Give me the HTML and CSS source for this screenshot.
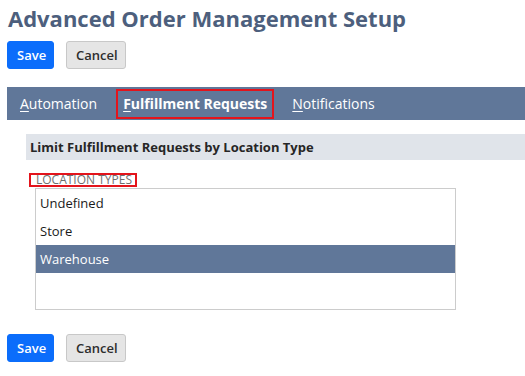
FILE: index.html
```html
<!DOCTYPE html>
<html>
<head>
<meta charset="utf-8">
<link rel="stylesheet" href="styles.css">
</head>
<body>
<h1 class="title">Advanced Order Management Setup</h1>
<div class="actions">
  <button class="btn btn-primary">Save</button>
  <button class="btn btn-secondary">Cancel</button>
</div>
<nav class="tabs">
  <span class="tab"><u>A</u>utomation</span>
  <span class="tab tab-active"><u>F</u>ulfillment Requests</span>
  <span class="tab"><u>N</u>otifications</span>
</nav>
<section class="content">
  <div class="section-header">Limit Fulfillment Requests by Location Type</div>
  <div class="field">
    <div class="field-label">LOCATION TYPES</div>
    <ul class="listbox">
      <li class="option">Undefined</li>
      <li class="option">Store</li>
      <li class="option option-selected">Warehouse</li>
    </ul>
  </div>
</section>
<div class="actions actions-bottom">
  <button class="btn btn-primary">Save</button>
  <button class="btn btn-secondary">Cancel</button>
</div>
</body>
</html>
```

FILE: styles.css
```css
html, body {
  margin: 0;
  padding: 0;
  background: #ffffff;
  font-family: "Open Sans", "Liberation Sans", sans-serif;
}
.title {
  margin: 0;
  padding: 3px 0 0 8px;
  font-size: 22px;
  line-height: 30px;
  font-weight: 700;
  color: #4d5f7d;
}
.actions {
  display: flex;
  gap: 12px;
  padding: 8px 0 0 7px;
}
.actions-bottom {
  padding-top: 24px;
}
.btn {
  height: 28px;
  box-sizing: border-box;
  border-radius: 3px;
  font-family: "Open Sans", "Liberation Sans", sans-serif;
  font-size: 13px;
  font-weight: 600;
  padding: 0 9px;
  cursor: pointer;
}
.btn-primary {
  background: #0b6dfb;
  color: #ffffff;
  border: 1px solid #0b6dfb;
  width: 47px;
}
.btn-secondary {
  background: #e5e5e5;
  color: #2d2d2d;
  border: 1px solid #c8c8c8;
  width: 60px;
}
.tabs {
  margin: 18px 0 0 7px;
  height: 33px;
  background: #607799;
  display: flex;
  align-items: center;
  padding-left: 13px;
  gap: 0;
  position: relative;
}
.tab {
  color: #ffffff;
  font-size: 14px;
  line-height: 20px;
  margin-right: 20px;
}
.tab u {
  text-decoration-thickness: 1px;
  text-underline-offset: 2px;
}
.tab-active {
  font-weight: 700;
  border: 2px solid #e3141c;
  padding: 3px 5px;
  margin-left: -1px;
  margin-right: 18px;
  position: relative;
}
.tab-active::after {
  content: "";
  position: absolute;
  left: 72px;
  bottom: -7px;
  width: 0;
  height: 0;
  border-left: 5px solid transparent;
  border-right: 5px solid transparent;
  border-bottom: 4px solid #ffffff;
}
.content {
  padding: 14px 0 0 26px;
}
.section-header {
  height: 26px;
  background: #e0e4ea;
  color: #262626;
  font-size: 13px;
  font-weight: 700;
  line-height: 26px;
  padding-left: 4px;
}
.field {
  padding: 13px 0 0 3px;
}
.field-label {
  width: fit-content;
  border: 2px solid #e3141c;
  color: #6f6f6f;
  font-size: 12px;
  line-height: 9px;
  padding: 0 3px 0 5px;
  height: 10px;
}
.listbox {
  list-style: none;
  margin: 1px 0 0 6px;
  padding: 0;
  width: 419px;
  height: 120px;
  border: 1px solid #cccccc;
  box-sizing: content-box;
}
.option {
  height: 28px;
  line-height: 28px;
  padding-left: 4px;
  font-size: 13px;
  color: #1a1a1a;
}
.option-selected {
  background: #607799;
  color: #ffffff;
}
```
